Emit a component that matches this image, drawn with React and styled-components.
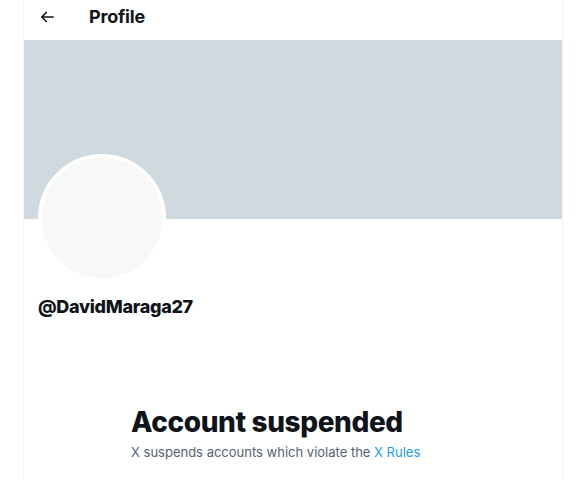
import React from "react";
import styled, { createGlobalStyle } from "styled-components";

const GlobalStyle = createGlobalStyle`
  html, body {
    margin: 0;
    padding: 0;
    background: #ffffff;
  }
  body {
    font-family: "Inter", "Liberation Sans", sans-serif;
    color: #0f1419;
  }
`;

const Page = styled.div`
  display: flex;
  justify-content: flex-start;
  padding-left: 23px;
  min-height: 480px;
`;

const Column = styled.main`
  width: 538px;
  min-height: 480px;
  border-left: 1px solid #eff3f4;
  border-right: 1px solid #eff3f4;
  display: flex;
  flex-direction: column;
`;

const Header = styled.header`
  height: 40px;
  display: flex;
  align-items: center;
  padding: 0 16px 7px 6px;
  box-sizing: border-box;
  gap: 25px;
`;

const BackButton = styled.button`
  width: 34px;
  height: 34px;
  border: none;
  background: none;
  padding: 0;
  display: flex;
  align-items: center;
  justify-content: center;
  color: #0f1419;
  svg {
    width: 18px;
    height: 18px;
    fill: currentColor;
  }
`;

const Title = styled.h2`
  margin: 0;
  font-size: 18px;
  font-weight: 700;
  letter-spacing: -0.2px;
`;

const Banner = styled.div`
  height: 179px;
  background: #cfd9de;
`;

const ProfileInfo = styled.section`
  padding: 0 14px;
  display: flex;
  flex-direction: column;
`;

const Avatar = styled.div`
  width: 120px;
  height: 120px;
  margin-top: -65px;
  border-radius: 50%;
  border: 4px solid #ffffff;
  background: #f7f9f9;
`;

const Handle = styled.div`
  margin-top: 13px;
  font-size: 18px;
  font-weight: 800;
  line-height: 24px;
  letter-spacing: -0.3px;
`;

const EmptyState = styled.div`
  width: 324px;
  margin: 86px auto 0;
`;

const EmptyTitle = styled.h1`
  margin: 0;
  font-size: 28px;
  font-weight: 800;
  line-height: 34px;
  letter-spacing: -0.4px;
`;

const EmptyText = styled.p`
  margin: 4px 0 0;
  font-size: 13px;
  line-height: 18px;
  color: #536471;
  white-space: nowrap;
`;

const RulesLink = styled.a`
  color: #1d9bf0;
  text-decoration: none;
`;

export default function App() {
  return (
    <>
      <GlobalStyle />
      <Page>
        <Column>
          <Header>
            <BackButton aria-label="Back">
              <svg viewBox="0 0 24 24">
                <path d="M7.414 13l5.043 5.04-1.414 1.42L3.586 12l7.457-7.46 1.414 1.42L7.414 11H21v2H7.414z" />
              </svg>
            </BackButton>
            <Title>Profile</Title>
          </Header>
          <Banner />
          <ProfileInfo>
            <Avatar />
            <Handle>@DavidMaraga27</Handle>
          </ProfileInfo>
          <EmptyState>
            <EmptyTitle>Account suspended</EmptyTitle>
            <EmptyText>
              X suspends accounts which violate the <RulesLink href="#">X Rules</RulesLink>
            </EmptyText>
          </EmptyState>
        </Column>
      </Page>
    </>
  );
}
